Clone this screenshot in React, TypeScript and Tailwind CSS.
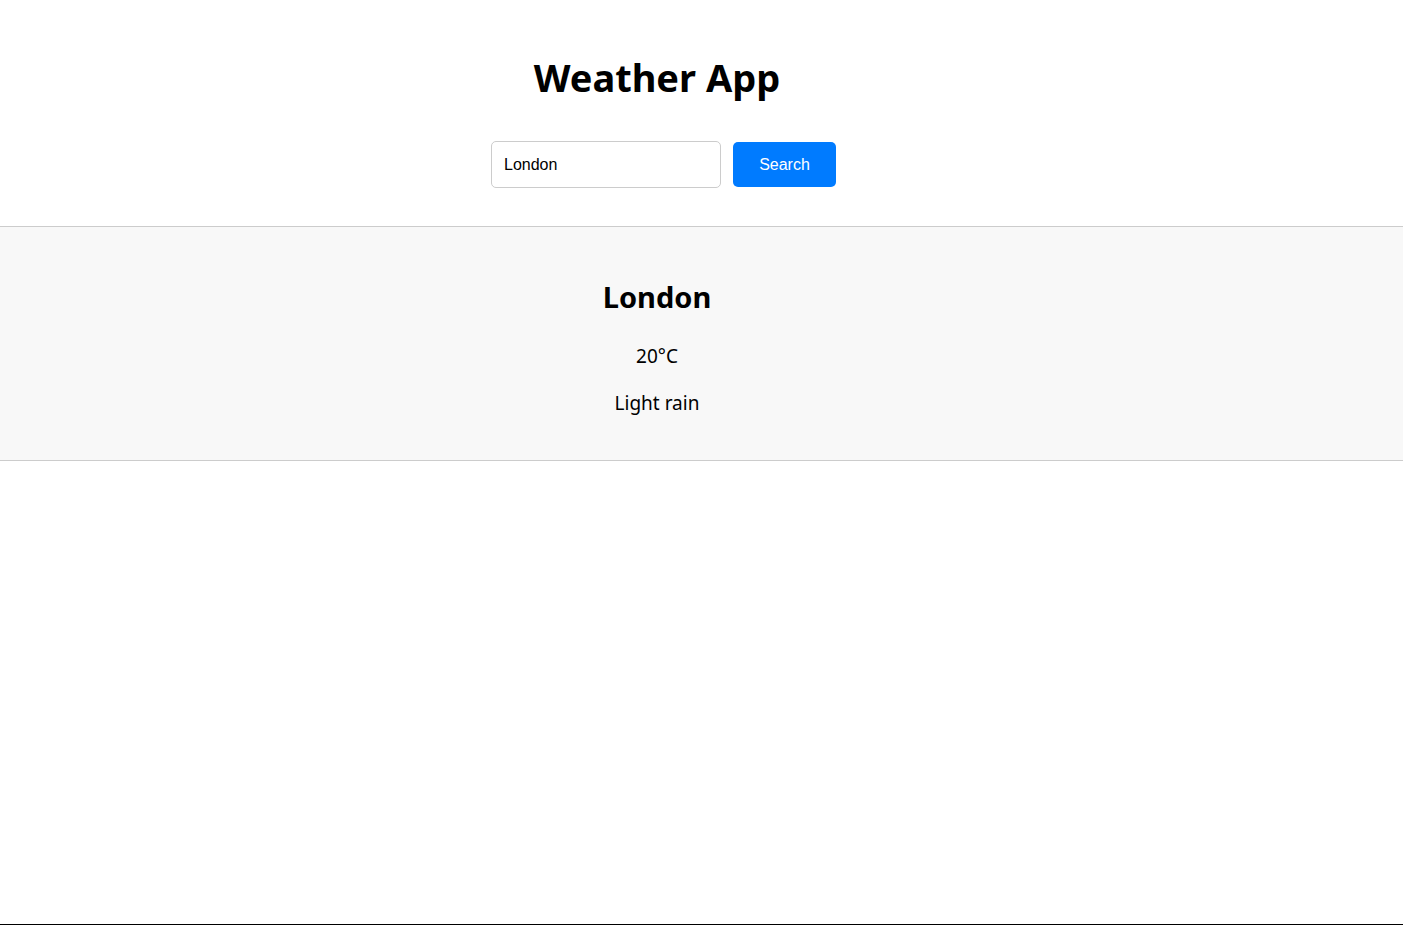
import React from 'react';

function App() {
  const city = 'London';
  return (
    <div className="h-[925px] w-full border-b border-black bg-white font-['Noto_Sans',sans-serif] text-black">
      <div className="w-[1314px] pt-[47px] text-center">
        <h1 className="text-[38px] leading-[60px] font-bold">Weather App</h1>
      </div>
      <div className="flex w-[1314px] justify-center pt-[34px] pb-[38px] pl-[13px]">
        <div className="flex items-center gap-3 font-['Liberation_Sans',Arial,sans-serif] text-base">
          <input
            className="h-[47px] w-[230px] rounded-[5px] border border-[#cccccc] px-3 text-black outline-none"
            defaultValue={city}
          />
          <button className="h-[45px] w-[103px] rounded-[5px] bg-[#007bff] text-white">
            Search
          </button>
        </div>
      </div>
      <div className="w-full border-y border-[#cccccc] bg-[#f8f8f8]">
        <div className="flex w-[1314px] flex-col items-center pt-[50px] pb-[44px]">
          <h2 className="text-[29px] leading-[40px] font-bold">{city}</h2>
          <p className="mt-[26px] text-[19px] leading-[26px]">20°C</p>
          <p className="mt-[21px] text-[19px] leading-[26px]">Light rain</p>
        </div>
      </div>
    </div>
  );
}

export default App;
